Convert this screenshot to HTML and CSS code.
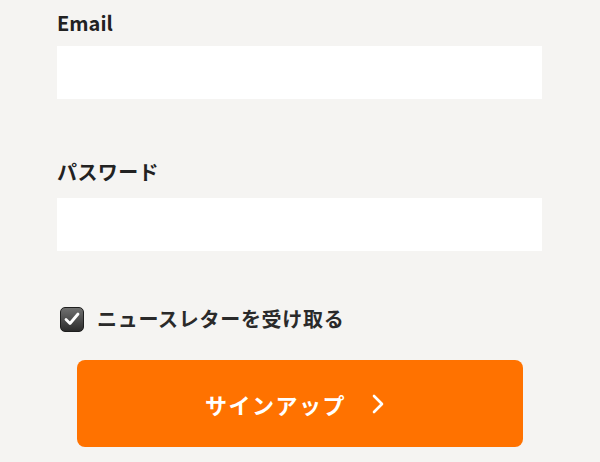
FILE: index.html
```html
<!DOCTYPE html>
<html lang="ja">

<head>
  <meta charset="utf-8">
  <title>サインアップ</title>
  <link rel="stylesheet" href="styles.css">
</head>

<body>
  <form class="signup" onsubmit="return false">
    <div class="field">
      <label for="email">Email</label>
      <input type="email" id="email">
    </div>

    <div class="field">
      <label for="password">パスワード</label>
      <input type="password" id="password">
    </div>

    <label class="newsletter">
      <span class="check">
        <svg width="16" height="14" viewBox="0 0 16 14">
          <polyline points="2,7.5 6,11.5 14,2" fill="none" stroke="#fff" stroke-width="2.8" stroke-linecap="round" stroke-linejoin="round" />
        </svg>
      </span>
      ニュースレターを受け取る
    </label>

    <button type="submit" class="submit">
      サインアップ
      <svg class="chevron" width="14" height="22" viewBox="0 0 14 22">
        <polyline points="3,3 11,11 3,19" fill="none" stroke="#fff" stroke-width="2.6" stroke-linecap="round" stroke-linejoin="round" />
      </svg>
    </button>
  </form>
</body>

</html>
```

FILE: styles.css
```css
body {
  margin: 0;
  background: #f5f4f2;
  font-family: "Noto Sans CJK JP", "Noto Sans", sans-serif;
  color: #222;
}

.signup {
  padding: 8px 58px 0 57px;
}

.field label {
  display: block;
  font-size: 20px;
  font-weight: bold;
  line-height: 30px;
  margin-bottom: 8px;
}

.field label[for="password"] {
  letter-spacing: 0.4px;
  margin-bottom: 11px;
}

.field input {
  display: block;
  box-sizing: border-box;
  width: 100%;
  height: 53px;
  border: none;
  background: #fff;
}

.field + .field {
  margin-top: 58px;
}

.newsletter {
  display: flex;
  align-items: center;
  gap: 13px;
  margin: 55px 0 0 3px;
  font-size: 20px;
  font-weight: bold;
  line-height: 26px;
  letter-spacing: 0.7px;
  color: #2a2a2a;
}

.check {
  display: flex;
  align-items: center;
  justify-content: center;
  box-sizing: border-box;
  width: 24px;
  height: 25px;
  border: 1px solid #1e1e1e;
  border-radius: 5px;
  background: linear-gradient(#707070, #2c2c2c);
}

.submit {
  display: flex;
  align-items: center;
  justify-content: center;
  gap: 25px;
  width: 446px;
  height: 87px;
  margin: 28px 0 0 20px;
  padding: 0 10px 0 0;
  border: none;
  border-radius: 8px;
  background: #ff7200;
  color: #fff;
  font-family: inherit;
  font-size: 22px;
  font-weight: bold;
  letter-spacing: 1.5px;
}
```
